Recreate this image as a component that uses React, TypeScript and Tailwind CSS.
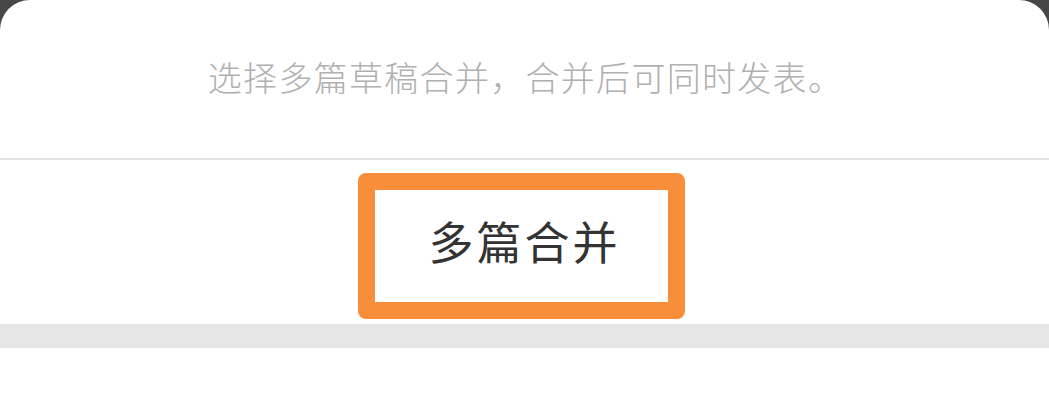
import React from "react";

export default function App() {
  return (
    <div
      className="w-[1049px] h-[400px] bg-[#474747] overflow-hidden"
      style={{ fontFamily: '"Noto Sans CJK SC", "Noto Sans", sans-serif' }}
    >
      <div className="w-full h-full bg-white rounded-t-[30px] flex flex-col">
        <div className="h-[158px] flex items-center justify-center pb-[4px] pl-[2px]">
          <p className="text-[34px] leading-none font-light text-[#b0b0b0] tracking-[1.3px]">
            选择多篇草稿合并，合并后可同时发表。
          </p>
        </div>
        <div className="h-[2px] bg-[#e3e3e3]" />
        <div className="h-[164px] flex justify-center pt-[13px]">
          <div className="w-[327px] h-[146px] border-[17px] border-[#f98e3a] rounded-[8px] mr-[6px] flex items-center justify-center bg-white pb-[12px]">
            <span className="text-[45px] leading-none text-[#333333] tracking-[3px] pl-[6px]">
              多篇合并
            </span>
          </div>
        </div>
        <div className="h-[24px] bg-[#e6e6e6]" />
        <div className="flex-1 bg-white" />
      </div>
    </div>
  );
}
